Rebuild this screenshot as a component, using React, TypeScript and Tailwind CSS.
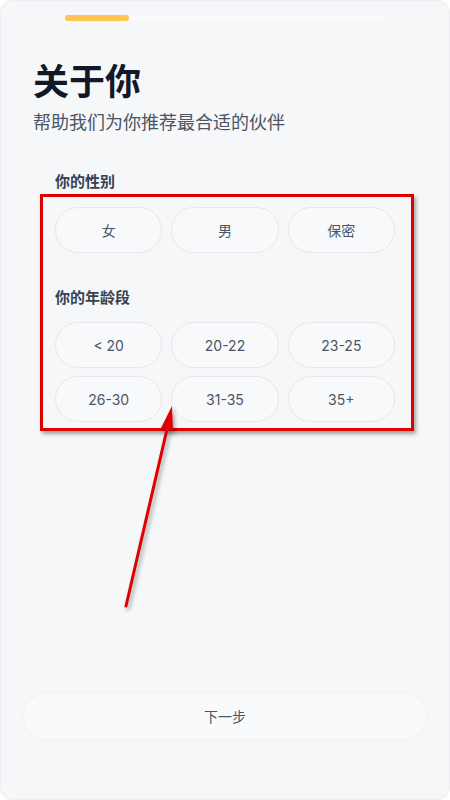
import React from "react";

const ages = ["< 20", "20-22", "23-25", "26-30", "31-35", "35+"];
const genders = ["女", "男", "保密"];

function Pill({ label }: { label: string }) {
  return (
    <button className="h-[46px] rounded-full border border-[#e6e7ea] bg-[#f8f9fb] text-[14px] text-[#4b5563] flex items-center justify-center">
      {label}
    </button>
  );
}

export default function App() {
  return (
    <div
      className="relative w-[450px] h-[800px] overflow-hidden bg-[#f6f7f9] rounded-[12px] border border-[#eceef1] flex flex-col"
      style={{ fontFamily: 'Inter, "Noto Sans CJK SC", sans-serif' }}
    >
      <div className="mt-[14px] mx-[64px] h-[6px] rounded-full bg-[#fbfbfd]">
        <div className="h-full w-[64px] rounded-full bg-[#fcc653]" />
      </div>

      <div className="px-[32px] mt-[39px]">
        <h1 className="text-[36px] leading-[44px] font-bold text-[#111827]">关于你</h1>
        <p className="mt-[6px] text-[18px] leading-[26px] text-[#4b5563]">帮助我们为你推荐最合适的伙伴</p>
      </div>

      <div className="pl-[54px] pr-[54px] mt-[35px]">
        <div className="text-[15px] leading-[22px] font-bold text-[#374151]">你的性别</div>
        <div className="mt-[14px] grid grid-cols-3 gap-[9px]">
          {genders.map((g) => (
            <Pill key={g} label={g} />
          ))}
        </div>

        <div className="mt-[34px] text-[15px] leading-[22px] font-bold text-[#374151]">你的年龄段</div>
        <div className="mt-[13px] grid grid-cols-3 gap-x-[9px] gap-y-[8px]">
          {ages.map((a) => (
            <Pill key={a} label={a} />
          ))}
        </div>
      </div>

      <div className="flex-1" />

      <div className="mx-[23px] mb-[60px]">
        <button className="w-full h-[45px] rounded-full bg-[#f9fafc] shadow-[0_0_6px_rgba(0,0,0,0.03)] text-[14px] text-[#4b5563]">
          下一步
        </button>
      </div>

      {/* annotation box */}
      <div className="absolute left-[39px] top-[193px] w-[374px] h-[237px] border-[3px] border-[#e00000] shadow-[2px_3px_4px_rgba(0,0,0,0.35)] pointer-events-none" />

      {/* annotation arrow */}
      <svg
        className="absolute left-[-1px] top-[-1px] pointer-events-none"
        width="450"
        height="800"
        viewBox="0 0 450 800"
        style={{ filter: "drop-shadow(2px 3px 2px rgba(0,0,0,0.35))" }}
      >
        <line x1="126" y1="606" x2="168" y2="425" stroke="#e00000" strokeWidth="3" strokeLinecap="round" />
        <polygon points="172,406 173,431 161,428" fill="#e00000" />
      </svg>
    </div>
  );
}
